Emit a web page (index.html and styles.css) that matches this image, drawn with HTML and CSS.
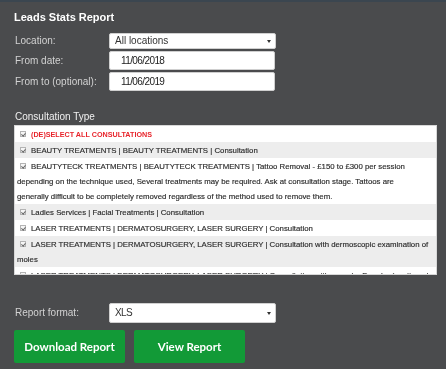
FILE: index.html
```
<!DOCTYPE html>
<html lang="en">
<head>
    <meta charset="UTF-8">
    <meta name="viewport" content="width=device-width, initial-scale=1.0">
    <title>Leads Stats Report</title>
    <link rel="stylesheet" href="styles.css">
</head>
<body>
    <div class="panel">
        <h1 class="title">Leads Stats Report</h1>

        <div class="form-grid">
            <label class="field-label">Location:</label>
            <div class="select-wrap">
                <select class="select">
                    <option>All locations</option>
                </select>
            </div>

            <label class="field-label">From date:</label>
            <input class="text-input" type="text" value="11/06/2018">

            <label class="field-label">From to (optional):</label>
            <input class="text-input" type="text" value="11/06/2019">
        </div>

        <div class="section-label">Consultation Type</div>
        <div class="listbox">
            <div class="opt opt-all"><span class="tick"></span>(DE)SELECT ALL CONSULTATIONS</div>
            <div class="opt"><span class="tick"></span>BEAUTY TREATMENTS | BEAUTY TREATMENTS | Consultation</div>
            <div class="opt"><span class="tick"></span>BEAUTYTECK TREATMENTS | BEAUTYTECK TREATMENTS | Tattoo Removal - £150 to £300 per session<br>depending on the technique used, Several treatments may be required. Ask at consultation stage. Tattoos are<br>generally difficult to be completely removed regardless of the method used to remove them.</div>
            <div class="opt"><span class="tick"></span>Ladies Services | Facial Treatments | Consultation</div>
            <div class="opt"><span class="tick"></span>LASER TREATMENTS | DERMATOSURGERY, LASER SURGERY | Consultation</div>
            <div class="opt"><span class="tick"></span>LASER TREATMENTS | DERMATOSURGERY, LASER SURGERY | Consultation with dermoscopic examination of<br>moles</div>
            <div class="opt"><span class="tick"></span>LASER TREATMENTS | DERMATOSURGERY, LASER SURGERY | Consultation with vascular Doppler (continued<br>assessment)</div>
            <div class="opt"><span class="tick"></span>LASER TREATMENTS | HAIR REMOVAL | Consultation</div>
            <div class="opt"><span class="tick"></span>LASER TREATMENTS | SKIN REJUVENATION | Consultation</div>
        </div>

        <div class="form-grid format-row">
            <label class="field-label">Report format:</label>
            <div class="select-wrap select-tall">
                <select class="select select-xls">
                    <option>XLS</option>
                </select>
            </div>
        </div>

        <div class="actions">
            <button class="btn" type="button">Download Report</button>
            <button class="btn" type="button">View Report</button>
        </div>
    </div>
</body>
</html>
```

FILE: styles.css
```
* {
    margin: 0;
    padding: 0;
    box-sizing: border-box;
}

body {
    background: #4a4b4d;
    border-top: 2px solid #3b4650;
    font-family: 'Liberation Sans', Arial, sans-serif;
    color: #dcdcdc;
}

.panel {
    padding: 8px 14px 0 14px;
}

.title {
    font-size: 11px;
    line-height: 14px;
    font-weight: 700;
    color: #ffffff;
}

/* label / control rows */
.form-grid {
    display: grid;
    grid-template-columns: 95px 167px;
    row-gap: 2px;
    align-items: center;
    margin-top: 9px;
}

.field-label {
    font-size: 10px;
    line-height: 12px;
    color: #d2d2d2;
    padding-left: 1px;
}

.select-wrap {
    position: relative;
    height: 16px;
}

.select-wrap::after {
    content: '';
    position: absolute;
    right: 5px;
    top: 50%;
    margin-top: -1px;
    border-left: 2px solid transparent;
    border-right: 2px solid transparent;
    border-top: 3px solid #333;
}

.select {
    appearance: none;
    -webkit-appearance: none;
    display: block;
    width: 100%;
    height: 100%;
    background: #ffffff;
    border: 1px solid #d0d0d0;
    border-radius: 2px;
    font-family: 'Liberation Sans', Arial, sans-serif;
    font-size: 10px;
    line-height: 12px;
    color: #333;
    padding: 0 0 0 5px;
    outline: none;
}

.text-input {
    display: block;
    width: 166px;
    height: 19px;
    background: #ffffff;
    border: 1px solid #cfcfcf;
    border-radius: 2px;
    font-family: 'Liberation Sans', Arial, sans-serif;
    font-size: 10px;
    letter-spacing: -0.6px;
    color: #222;
    padding: 0 0 0 11px;
    outline: none;
}

.section-label {
    font-size: 10px;
    line-height: 12px;
    color: #f0f0f0;
    margin-top: 20px;
    padding-left: 1px;
}

/* consultation list */
.listbox {
    margin-top: 2px;
    width: 423px;
    height: 150px;
    background: #ffffff;
    border: 1px solid #d8d8d8;
    overflow-y: scroll;
}

.listbox::-webkit-scrollbar {
    width: 10px;
}

.listbox::-webkit-scrollbar-track {
    background: #f1f1f1;
}

.listbox::-webkit-scrollbar-thumb {
    background: #c3c3c3;
    border: 1px solid #f1f1f1;
    border-left-width: 2px;
}

.listbox::-webkit-scrollbar-button:single-button {
    height: 7px;
    background-color: #f1f1f1;
    background-repeat: no-repeat;
    background-position: center;
}

.listbox::-webkit-scrollbar-button:single-button:vertical:decrement {
    background-image: url("data:image/svg+xml;utf8,<svg xmlns='http://www.w3.org/2000/svg' width='5' height='3'><path d='M0 3 L2.5 0 L5 3 Z' fill='%23a0a0a0'/></svg>");
}

.listbox::-webkit-scrollbar-button:single-button:vertical:increment {
    background-image: url("data:image/svg+xml;utf8,<svg xmlns='http://www.w3.org/2000/svg' width='5' height='3'><path d='M0 0 L2.5 3 L5 0 Z' fill='%23505050'/></svg>");
}

.opt {
    font-size: 7.8px;
    line-height: 15px;
    color: #2a2a2a;
    -webkit-text-stroke: 0.15px currentColor;
    white-space: nowrap;
    padding: 0.5px 0 0.5px 2px;
}

.opt:nth-child(even) {
    background: #ededed;
}

.opt-all {
    color: #e8242b;
    font-weight: 700;
    font-size: 7.2px;
    -webkit-text-stroke: 0;
}

.tick {
    display: inline-block;
    width: 6px;
    height: 6px;
    margin: 0 5px 0 3px;
    vertical-align: -0.5px;
    border: 1px solid #b4b4b4;
    background: #f6f6f6;
    position: relative;
}

.tick::after {
    content: '';
    position: absolute;
    left: 1px;
    top: 0;
    width: 1.5px;
    height: 3px;
    border-right: 1px solid #666;
    border-bottom: 1px solid #666;
    transform: rotate(40deg);
}

.format-row {
    margin-top: 28px;
}

.select-tall {
    height: 20px;
}

.select-xls {
    letter-spacing: -0.6px;
}

/* buttons */
.actions {
    display: flex;
    gap: 9px;
    margin-top: 7px;
}

.btn {
    width: 111px;
    height: 33px;
    background: #129a37;
    border: none;
    border-radius: 2px;
    color: #ffffff;
    font-family: Lato, sans-serif;
    font-size: 11.5px;
    font-weight: 700;
}
```
